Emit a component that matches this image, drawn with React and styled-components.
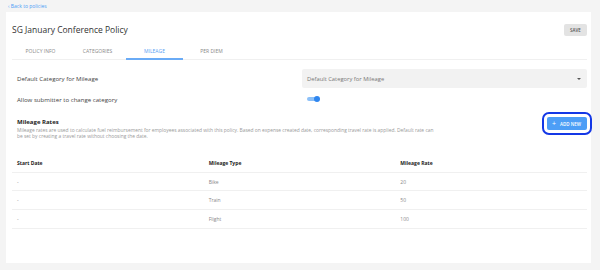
import React from 'react';
import styled, { createGlobalStyle } from 'styled-components';

const GlobalStyle = createGlobalStyle`
  body {
    margin: 0;
    background: #f4f4f4;
    font-family: "Open Sans", "Noto Sans", sans-serif;
    color: #333;
  }
`;

const Page = styled.div`
  padding: 3px 9px 0 6px;
`;

const BackLink = styled.a`
  display: block;
  font-size: 5px;
  line-height: 6px;
  color: #4a9cf5;
  padding-left: 2px;
  text-decoration: none;
`;

const Card = styled.div`
  margin-top: 3px;
  background: #fff;
  padding: 12px 4px 34px 6px;
`;

const Header = styled.div`
  display: flex;
  align-items: center;
  justify-content: space-between;
  height: 12px;
`;

const Title = styled.h1`
  margin: 0;
  font-size: 8.5px;
  font-weight: 400;
  color: #333;
  line-height: 10px;
`;

const SaveButton = styled.button`
  width: 23px;
  height: 12px;
  padding: 0;
  border: none;
  border-radius: 2px;
  background: #e3e3e3;
  color: #555;
  font-family: inherit;
  font-size: 4.5px;
  font-weight: 600;
`;

const TabBar = styled.div`
  display: flex;
  margin-top: 6px;
  border-bottom: 1px solid #f0f0f0;
`;

const Tab = styled.div`
  width: 57px;
  height: 16px;
  line-height: 18px;
  text-align: center;
  font-size: 5px;
  color: ${p => (p.$active ? '#5aa2f3' : '#8a8a8a')};
  border-bottom: 2px solid ${p => (p.$active ? '#6aabf6' : 'transparent')};
  margin-bottom: -1px;
`;

const Content = styled.div`
  padding: 9px 0 0 5px;
`;

const FormRow = styled.div`
  display: grid;
  grid-template-columns: 285px 1fr;
  align-items: center;
  height: ${p => p.$h}px;
  margin-top: ${p => p.$mt || 0}px;
`;

const Label = styled.div`
  font-size: 6.1px;
  color: #444;
`;

const Select = styled.div`
  display: flex;
  align-items: center;
  justify-content: space-between;
  height: 19px;
  padding: 0 6px 0 5px;
  background: #f2f2f2;
  border-radius: 2px;
  font-size: 5.8px;
  color: #777;
`;

const Caret = styled.span`
  width: 0;
  height: 0;
  border-left: 2px solid transparent;
  border-right: 2px solid transparent;
  border-top: 2px solid #555;
`;

const Toggle = styled.div`
  position: relative;
  width: 11px;
  height: 4px;
  margin-left: 5px;
  border-radius: 2px;
  background: #8cc0f8;
`;

const Knob = styled.span`
  position: absolute;
  right: -2px;
  top: -1px;
  width: 6px;
  height: 6px;
  border-radius: 50%;
  background: #2f86ef;
`;

const RatesSection = styled.div`
  display: flex;
  justify-content: space-between;
  align-items: flex-start;
  margin-top: 13px;
`;

const RatesText = styled.div`
  width: 420px;
`;

const RatesTitle = styled.div`
  font-size: 6px;
  font-weight: 700;
  color: #222;
  line-height: 8px;
`;

const RatesDesc = styled.p`
  margin: 1px 0 0;
  font-size: 4.9px;
  line-height: 6px;
  color: #999;
`;

const AddButton = styled.button`
  display: flex;
  align-items: center;
  gap: 4px;
  width: 40px;
  height: 13px;
  margin-top: -1px;
  padding: 0 0 0 5px;
  border: none;
  border-radius: 2px;
  background: #4d9ef6;
  color: #fff;
  font-family: inherit;
  font-size: 4.5px;
  font-weight: 600;
  outline: 2px solid #1438e6;
  outline-offset: 3px;
`;

const Plus = styled.span`
  font-size: 7px;
  line-height: 1;
  font-weight: 400;
`;

const Table = styled.div`
  margin: 15px 0 0 -5px;
`;

const TableRow = styled.div`
  display: grid;
  grid-template-columns: 1fr 1fr 1fr;
  align-items: center;
  height: 18.7px;
  box-sizing: border-box;
  border-bottom: 1px solid #f0f0f0;
`;

const Cell = styled.div`
  padding-left: 5px;
  font-size: 5px;
  font-weight: ${p => (p.$head ? 700 : 400)};
  color: ${p => (p.$head ? '#222' : '#888')};
`;

const rates = [
  { date: '-', type: 'Bike', rate: '20' },
  { date: '-', type: 'Train', rate: '50' },
  { date: '-', type: 'Flight', rate: '100' },
];

const tabs = ['POLICY INFO', 'CATEGORIES', 'MILEAGE', 'PER DIEM'];

export default function App() {
  return (
    <Page>
      <GlobalStyle />
      <BackLink href="#">‹ Back to policies</BackLink>
      <Card>
        <Header>
          <Title>SG January Conference Policy</Title>
          <SaveButton>SAVE</SaveButton>
        </Header>
        <TabBar>
          {tabs.map(t => (
            <Tab key={t} $active={t === 'MILEAGE'}>{t}</Tab>
          ))}
        </TabBar>
        <Content>
          <FormRow $h={19}>
            <Label>Default Category for Mileage</Label>
            <Select>
              Default Category for Mileage
              <Caret />
            </Select>
          </FormRow>
          <FormRow $h={12} $mt={5}>
            <Label>Allow submitter to change category</Label>
            <Toggle><Knob /></Toggle>
          </FormRow>
          <RatesSection>
            <RatesText>
              <RatesTitle>Mileage Rates</RatesTitle>
              <RatesDesc>
                Mileage rates are used to calculate fuel reimbursement for employees associated with this policy. Based on expense created date, corresponding travel rate is applied. Default rate can be set by creating a travel rate without choosing the date.
              </RatesDesc>
            </RatesText>
            <AddButton><Plus>+</Plus>ADD NEW</AddButton>
          </RatesSection>
          <Table>
            <TableRow>
              <Cell $head>Start Date</Cell>
              <Cell $head>Mileage Type</Cell>
              <Cell $head>Mileage Rate</Cell>
            </TableRow>
            {rates.map(r => (
              <TableRow key={r.type}>
                <Cell>{r.date}</Cell>
                <Cell>{r.type}</Cell>
                <Cell>{r.rate}</Cell>
              </TableRow>
            ))}
          </Table>
        </Content>
      </Card>
    </Page>
  );
}
